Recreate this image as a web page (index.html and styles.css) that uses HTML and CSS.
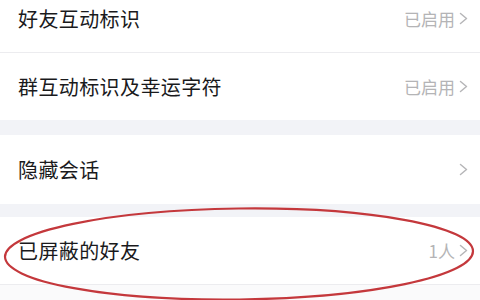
FILE: index.html
```html
<!DOCTYPE html>
<html lang="zh">
<head>
<meta charset="utf-8">
<link rel="stylesheet" href="styles.css">
</head>
<body>
<div class="page">
  <div class="list">
    <div class="row row-first line">
      <span class="label">好友互动标识</span>
      <span class="value">已启用<svg class="chev" viewBox="0 0 9 13"><path d="M1.5 1.5 L7.5 6.5 L1.5 11.5"/></svg></span>
    </div>
    <div class="row">
      <span class="label">群互动标识及幸运字符</span>
      <span class="value">已启用<svg class="chev" viewBox="0 0 9 13"><path d="M1.5 1.5 L7.5 6.5 L1.5 11.5"/></svg></span>
    </div>
    <div class="gap"></div>
    <div class="row row-tall">
      <span class="label">隐藏会话</span>
      <span class="value"><svg class="chev" viewBox="0 0 9 13"><path d="M1.5 1.5 L7.5 6.5 L1.5 11.5"/></svg></span>
    </div>
    <div class="gap gap-small"></div>
    <div class="row line">
      <span class="label">已屏蔽的好友</span>
      <span class="value">1人<svg class="chev" viewBox="0 0 9 13"><path d="M1.5 1.5 L7.5 6.5 L1.5 11.5"/></svg></span>
    </div>
    <div class="rest"></div>
  </div>
  <svg class="circle" viewBox="0 0 480 300" width="480" height="300">
    <ellipse cx="239" cy="254" rx="234" ry="45.5" transform="rotate(-0.7 239 254)"/>
  </svg>
</div>
</body>
</html>
```
FILE: styles.css
```css
html, body {
  margin: 0;
  padding: 0;
  background: #ffffff;
}
.page {
  position: relative;
  width: 480px;
  height: 300px;
  overflow: hidden;
  font-family: "Noto Sans CJK SC", "Noto Sans", sans-serif;
}
.list {
  display: flex;
  flex-direction: column;
  margin-top: -15px;
}
.row {
  display: flex;
  align-items: center;
  justify-content: space-between;
  height: 67px;
  padding: 0 12px 0 18px;
  background: #ffffff;
}
.row-tall {
  height: 69px;
}
.line {
  border-bottom: 1px solid #ececef;
}
.label {
  font-size: 20px;
  color: #1a1a1c;
  letter-spacing: 0.4px;
}
.value {
  display: flex;
  align-items: center;
  gap: 4px;
  font-size: 17px;
  color: #b4b4b6;
}
.chev {
  width: 9px;
  height: 13px;
  fill: none;
  stroke: #b6b6b8;
  stroke-width: 1.5;
  stroke-linecap: round;
  stroke-linejoin: round;
}
.gap {
  height: 15px;
  background: #f2f3f7;
}
.gap-small {
  height: 13px;
}
.rest {
  height: 40px;
  background: #fafafb;
}
.circle {
  position: absolute;
  left: 0;
  top: 0;
}
.circle ellipse {
  fill: none;
  stroke: #c4383c;
  stroke-width: 2.2;
}
```
